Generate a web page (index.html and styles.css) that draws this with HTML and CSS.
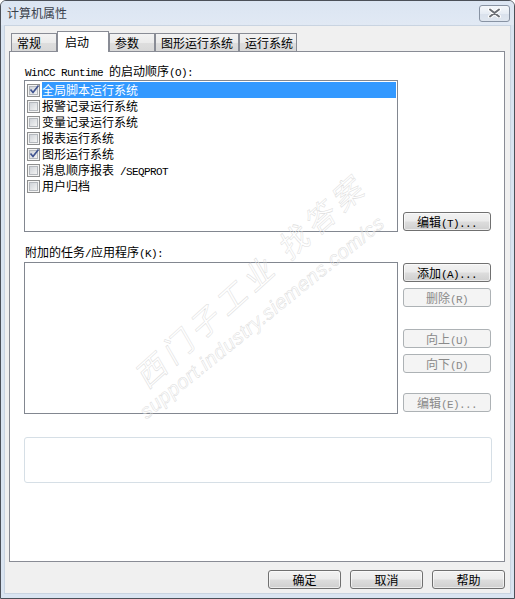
FILE: index.html
```html
<!DOCTYPE html>
<html>
<head>
<meta charset="utf-8">
<link rel="stylesheet" href="styles.css">
</head>
<body>
<div class="window">
  <div class="titlebar">
    <span class="title">计算机属性</span>
    <div class="close">
      <svg width="13" height="10" viewBox="0 0 13 10">
        <path d="M2 1.5 L11 8.5 M11 1.5 L2 8.5" stroke="#ffffff" stroke-width="4" stroke-linecap="round"/>
        <path d="M2 1.5 L11 8.5 M11 1.5 L2 8.5" stroke="#6a6e74" stroke-width="2" stroke-linecap="round"/>
      </svg>
    </div>
  </div>
  <div class="client">
    <div class="tabs">
      <div class="tab t1">常规</div>
      <div class="tab t2 sel">启动</div>
      <div class="tab t3">参数</div>
      <div class="tab t4">图形运行系统</div>
      <div class="tab t5">运行系统</div>
    </div>
    <div class="panel">
      <div class="lbl"><span class="m">WinCC Runtime </span>的启动顺序<span class="m">(O):</span></div>
      <div class="row row1">
        <div class="list list1">
          <div class="item sel"><span class="cb"><span class="cbin"><svg class="chk" width="11" height="11" viewBox="0 0 11 11"><path d="M1.5 5.5 L4 8.5 L9.5 1.5" fill="none" stroke="#3f5390" stroke-width="1.7"/></svg></span></span><span class="txt">全局脚本运行系统</span></div>
          <div class="item"><span class="cb"><span class="cbin"></span></span><span class="txt">报警记录运行系统</span></div>
          <div class="item"><span class="cb"><span class="cbin"></span></span><span class="txt">变量记录运行系统</span></div>
          <div class="item"><span class="cb"><span class="cbin"></span></span><span class="txt">报表运行系统</span></div>
          <div class="item"><span class="cb"><span class="cbin"><svg class="chk" width="11" height="11" viewBox="0 0 11 11"><path d="M1.5 5.5 L4 8.5 L9.5 1.5" fill="none" stroke="#3f5390" stroke-width="1.7"/></svg></span></span><span class="txt">图形运行系统</span></div>
          <div class="item"><span class="cb"><span class="cbin"></span></span><span class="txt">消息顺序报表<span class="m"> /SEQPROT</span></span></div>
          <div class="item"><span class="cb"><span class="cbin"></span></span><span class="txt">用户归档</span></div>
        </div>
        <div class="btn btn-edit">编辑<span class="m">(T)...</span></div>
      </div>
      <div class="lbl lbl2">附加的任务<span class="m">/</span>应用程序<span class="m">(K):</span></div>
      <div class="row row2">
        <div class="list list2"></div>
        <div class="btncol">
          <div class="btn b-add">添加<span class="m">(A)...</span></div>
          <div class="btn dis b-del">删除<span class="m">(R)</span></div>
          <div class="btn dis b-up">向上<span class="m">(U)</span></div>
          <div class="btn dis b-down">向下<span class="m">(D)</span></div>
          <div class="btn dis b-edit2">编辑<span class="m">(E)...</span></div>
        </div>
      </div>
      <div class="group"></div>
    </div>
    <div class="footer">
      <div class="btn fbtn">确定</div>
      <div class="btn fbtn">取消</div>
      <div class="btn fbtn">帮助</div>
    </div>
  </div>
  <div class="wm">
    <div class="wm1">西门子工业<span class="wgap">找答案</span></div>
    <div class="wm2">support.industry.siemens.com/cs</div>
  </div>
</div>
</body>
</html>
```
FILE: styles.css
```css
* { box-sizing: border-box; }
html, body { margin: 0; padding: 0; }
body {
  width: 515px;
  height: 599px;
  overflow: hidden;
  background: #ffffff;
  color: #000;
  font: 12px/16px "Noto Sans CJK SC", sans-serif;
}
.m {
  font-family: "Liberation Mono", monospace;
  font-size: 11px;
  letter-spacing: -0.6px;
}
.window {
  position: relative;
  width: 515px;
  height: 599px;
  border: 1px solid #4b5058;
  border-radius: 6px 6px 0 0;
  background: #d9e4f1;
  display: flex;
  flex-direction: column;
}
.titlebar {
  height: 24px;
  flex: none;
  display: flex;
  align-items: center;
  justify-content: space-between;
  padding: 0 4px 0 6px;
  border-radius: 5px 5px 0 0;
  background: linear-gradient(#dbe5f2, #e1e9f4);
}
.title { color: #3a414b; font-size: 12px; }
.close {
  width: 31px;
  height: 17px;
  border: 1px solid #8893a3;
  border-radius: 3px;
  background: linear-gradient(#f4f7fb, #e6ecf4 50%, #d9e1ec 51%, #dfe6ef);
  display: flex;
  align-items: center;
  justify-content: center;
}
.client {
  flex: 1;
  margin: 0 3px 4px;
  border: 1px solid #c9d4e1;
  background: #f0f0f0;
  display: flex;
  flex-direction: column;
  padding: 5px 5px 0 4px;
}
.tabs {
  display: flex;
  align-items: flex-end;
  height: 20px;
  margin-left: 2px;
}
.tab {
  height: 18px;
  border: 1px solid #898c95;
  border-bottom: none;
  background: linear-gradient(#f3f3f3, #ebebeb 50%, #dedede 51%, #d8d8d8);
  padding-left: 5px;
  line-height: 17px;
  white-space: nowrap;
}
.t1 { width: 46px; }
.t2 { width: 52px; }
.t3 { width: 46px; }
.t4 { width: 84px; }
.t5 { width: 58px; }
.tab.sel {
  height: 21px;
  margin-bottom: -1px;
  background: #ffffff;
  position: relative;
  z-index: 1;
  padding-left: 7px;
  line-height: 19px;
}
.panel {
  width: 496px;
  height: 511px;
  border: 1px solid #898c95;
  background: #ffffff;
  padding: 11px 0 0 14px;
}
.lbl {
  height: 16px;
  line-height: 16px;
  padding-left: 1px;
  margin-bottom: 1px;
  white-space: nowrap;
}
.lbl2 { margin-top: 12px; margin-bottom: 2px; }
.row { display: flex; gap: 5px; }
.row1 { align-items: flex-end; }
.row2 { align-items: flex-start; }
.list {
  width: 374px;
  height: 152px;
  border: 1px solid #828790;
  background: #ffffff;
}
.list1 { padding: 1px 1px 0 1px; }
.item {
  display: flex;
  align-items: center;
  height: 16px;
}
.cb {
  width: 13px;
  height: 13px;
  margin: 0 2px 0 1px;
  border: 1px solid #8e8f8f;
  background: #f4f4f4;
  padding: 1px;
  flex: none;
}
.cbin {
  display: flex;
  align-items: center;
  justify-content: center;
  width: 9px;
  height: 9px;
  border: 1px solid #b4b8bd;
  background: linear-gradient(135deg, #cfd3d8, #f3f3f3);
  overflow: visible;
}
.chk { flex: none; margin: -2px -2px 0 0; }
.txt {
  flex: 1;
  height: 16px;
  line-height: 16px;
  white-space: nowrap;
}
.item.sel .txt { background: #3399ff; color: #ffffff; }
.btn {
  width: 88px;
  height: 19px;
  border: 1px solid #707070;
  border-radius: 3px;
  background: linear-gradient(#f2f2f2, #ebebeb 48%, #dddddd 52%, #cfcfcf);
  box-shadow: inset 0 0 0 1px rgba(255, 255, 255, 0.6);
  text-align: center;
  line-height: 17px;
  white-space: nowrap;
  color: #000;
}
.btn.dis {
  border-color: #adb2b5;
  background: #f4f4f4;
  box-shadow: none;
  color: #8a8a8a;
}
.btn-edit { margin-bottom: 1px; }
.btncol { display: flex; flex-direction: column; margin-top: 1px; }
.b-del { margin-top: 6px; }
.b-up { margin-top: 22px; }
.b-down { margin-top: 6px; }
.b-edit2 { margin-top: 20px; }
.group {
  margin-top: 23px;
  width: 468px;
  height: 46px;
  border: 1px solid #d6dfe6;
  border-radius: 3px;
}
.footer {
  display: flex;
  justify-content: flex-end;
  gap: 9px;
  padding-top: 8px;
}
.fbtn { width: 73px; }
.wm {
  position: absolute;
  left: 0;
  top: 0;
  width: 513px;
  height: 597px;
  pointer-events: none;
  overflow: hidden;
}
.wm1, .wm2 {
  position: absolute;
  white-space: nowrap;
  color: transparent;
  -webkit-text-stroke: 0.5px #dcdcdc;
  transform-origin: 0 50%;
}
.wm1 {
  left: 139px;
  top: 362px;
  font: 30px/30px "Noto Sans CJK SC", sans-serif;
  letter-spacing: 6px;
  transform: rotate(-42deg) skewX(-12deg);
}
.wgap { margin-left: 12px; }
.wm2 {
  left: 141px;
  top: 401px;
  font: italic 20px/24px "Liberation Sans", sans-serif;
  letter-spacing: 0.6px;
  transform: rotate(-39deg);
}
```
